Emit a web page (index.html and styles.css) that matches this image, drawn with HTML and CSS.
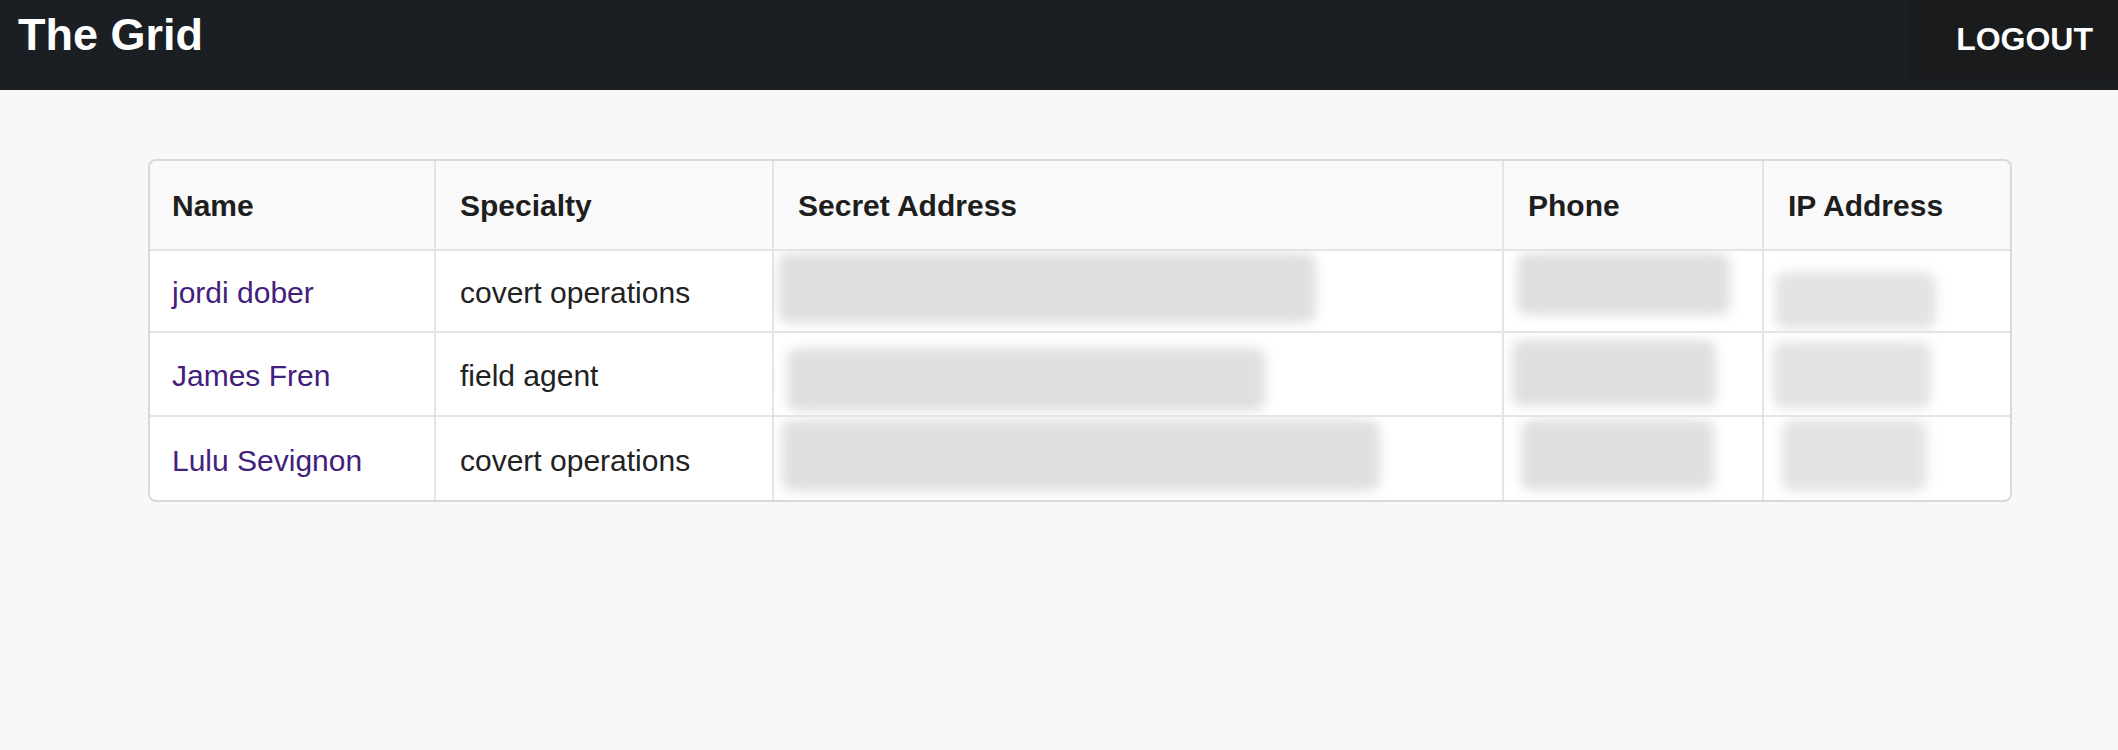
FILE: index.html
```html
<!DOCTYPE html>
<html lang="en">
<head>
<meta charset="utf-8">
<title>The Grid</title>
<link rel="stylesheet" href="styles.css">
</head>
<body>
<header class="topbar">
  <h1 class="brand">The Grid</h1>
  <a class="logout" href="#">LOGOUT</a>
</header>
<main class="content">
  <div class="table-wrap">
    <table class="grid">
      <thead>
        <tr>
          <th class="c-name">Name</th>
          <th class="c-spec">Specialty</th>
          <th class="c-addr">Secret Address</th>
          <th class="c-phone">Phone</th>
          <th class="c-ip">IP Address</th>
        </tr>
      </thead>
      <tbody>
        <tr>
          <td><a class="agent" href="#">jordi dober</a></td>
          <td>covert operations</td>
          <td class="redacted"><div class="blob b-a1"></div></td>
          <td class="redacted"><div class="blob b-p1"></div></td>
          <td class="redacted"><div class="blob b-i1"></div></td>
        </tr>
        <tr>
          <td><a class="agent" href="#">James Fren</a></td>
          <td>field agent</td>
          <td class="redacted"><div class="blob b-a2"></div></td>
          <td class="redacted"><div class="blob b-p2"></div></td>
          <td class="redacted"><div class="blob b-i2"></div></td>
        </tr>
        <tr>
          <td><a class="agent" href="#">Lulu Sevignon</a></td>
          <td>covert operations</td>
          <td class="redacted"><div class="blob b-a3"></div></td>
          <td class="redacted"><div class="blob b-p3"></div></td>
          <td class="redacted"><div class="blob b-i3"></div></td>
        </tr>
      </tbody>
    </table>
  </div>
</main>
</body>
</html>
```

FILE: styles.css
```css
* { box-sizing: border-box; }

html, body {
  margin: 0;
  padding: 0;
}

body {
  background: #f8f8f8;
  font-family: "Liberation Sans", Arial, Helvetica, sans-serif;
  color: #222;
}

.topbar {
  height: 90px;
  background: #1b1f23;
  display: flex;
  justify-content: space-between;
  align-items: flex-start;
}

.brand {
  margin: 12px 0 0 18px;
  font-size: 45px;
  line-height: 1;
  font-weight: bold;
  color: #ffffff;
}

.logout {
  display: block;
  height: 79px;
  padding: 23px 25px 24px 48px;
  background: #1a1b1c;
  border-bottom-left-radius: 8px;
  color: #ffffff;
  font-size: 32px;
  line-height: 1;
  font-weight: bold;
  text-decoration: none;
}

.content {
  padding: 69px 0 0 148px;
}

.table-wrap {
  width: 1864px;
  border: 2px solid #d9d9d9;
  border-radius: 8px;
  overflow: hidden;
  background: #ffffff;
}

.grid {
  width: 100%;
  table-layout: fixed;
  border-collapse: separate;
  border-spacing: 0;
  font-size: 30px;
  line-height: 36px;
}

.grid th,
.grid td {
  border-right: 2px solid #e4e4e4;
  border-bottom: 2px solid #e4e4e4;
  text-align: left;
  padding: 24px 20px 20px 24px;
  white-space: nowrap;
  overflow: hidden;
}

.grid th:first-child,
.grid td:first-child {
  padding-left: 22px;
}

.grid th:last-child,
.grid td:last-child {
  border-right: none;
}

.grid tbody tr:last-child td {
  border-bottom: none;
}

.grid th {
  background: #f9f9f9;
  color: #1e1e1e;
  font-weight: bold;
  padding-top: 27px;
  padding-bottom: 25px;
}

.grid td {
  color: #222222;
  height: 82px;
}

.grid tbody tr:nth-child(2) td { height: 84px; }
.grid tbody tr:nth-child(3) td { height: 83px; }

.c-name { width: 286px; }
.c-spec { width: 338px; }
.c-addr { width: 730px; }
.c-phone { width: 260px; }
.c-ip { width: 246px; }

.agent {
  color: #42207c;
  text-decoration: none;
}

.grid td.redacted {
  padding: 0;
  vertical-align: top;
}

.blob {
  background: #dfdfdf;
  border-radius: 10px;
  filter: blur(6px);
}

.b-a1 { margin: 2px 0 0 4px;  width: 538px; height: 70px; }
.b-p1 { margin: 2px 0 0 13px; width: 213px; height: 62px; }
.b-i1 { margin: 21px 0 0 11px; width: 161px; height: 57px; background: #e3e3e3; }

.b-a2 { margin: 15px 0 0 13px; width: 478px; height: 63px; }
.b-p2 { margin: 7px 0 0 8px;  width: 204px; height: 66px; }
.b-i2 { margin: 9px 0 0 9px;  width: 158px; height: 66px; background: #e3e3e3; }

.b-a3 { margin: 3px 0 0 8px;  width: 598px; height: 71px; }
.b-p3 { margin: 3px 0 0 17px; width: 193px; height: 70px; }
.b-i3 { margin: 3px 0 0 18px; width: 145px; height: 71px; background: #e3e3e3; }
```
